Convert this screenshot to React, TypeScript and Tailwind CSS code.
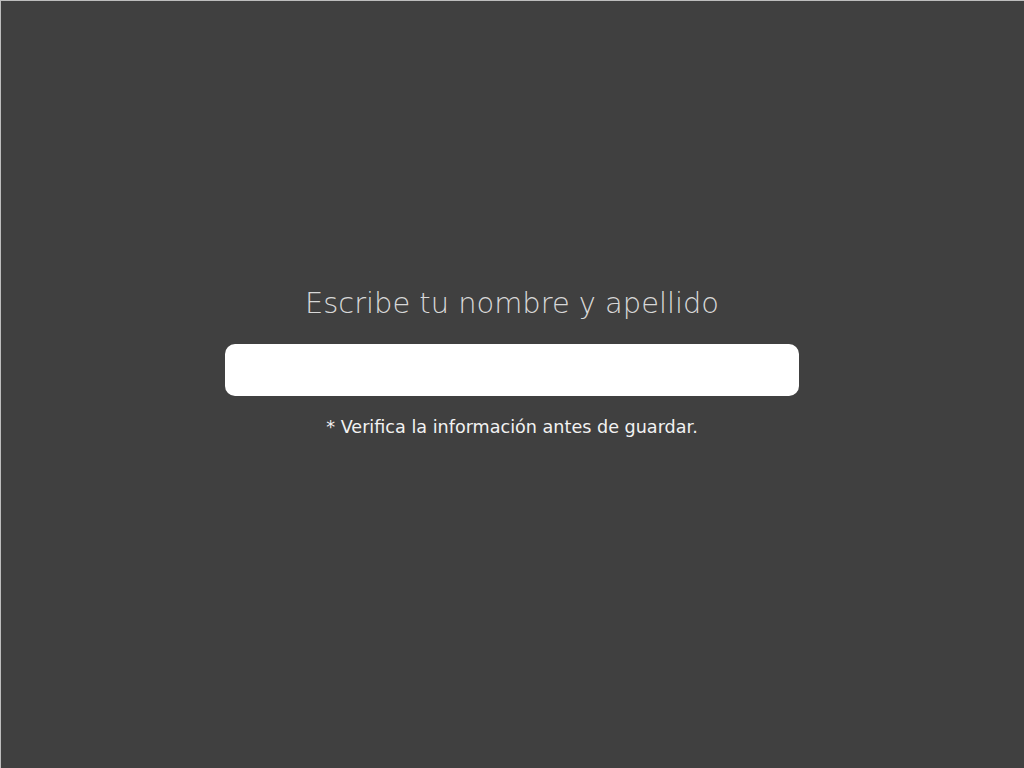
export default function App() {
  return (
    <div className="w-[1024px] h-[768px] bg-[#404040] shadow-[inset_1px_1px_0_#bdbdbd] flex flex-col items-center font-['DejaVu_Sans',sans-serif]">
      <h1 className="mt-[285px] text-[28.9px] font-light leading-[36px] text-[#d8d8d8]">
        Escribe tu nombre y apellido
      </h1>
      <input
        type="text"
        className="mt-[23px] w-[574px] h-[52px] rounded-[10px] bg-white outline-none px-4 text-[20px] text-[#333]"
      />
      <p className="mt-[20px] text-[17.6px] leading-[22px] text-[#f2f2f2]">
        * Verifica la información antes de guardar.
      </p>
    </div>
  );
}
